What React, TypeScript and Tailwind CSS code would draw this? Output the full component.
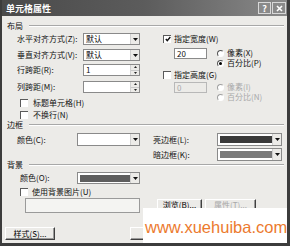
import React from "react";

const F = "font-['Noto_Sans_CJK_SC','Noto_Sans',sans-serif]";

function Arrow() {
  return (
    <svg width="5" height="3" viewBox="0 0 5 3">
      <path d="M0 0H5L2.5 3Z" fill="#111" />
    </svg>
  );
}

function Dropdown({ w, h = 12, text, swatch }: { w: string; h?: number; text?: string; swatch?: string }) {
  return (
    <div className={`${w} flex border border-[#8a8a8a] bg-white`} style={{ height: h }}>
      <div className="flex flex-1 items-center pl-[2px] text-[8px] leading-none text-black">
        {swatch ? <div className="h-[70%] w-full" style={{ background: swatch }} /> : text}
      </div>
      <div className="flex w-[9px] items-center justify-center border-l border-[#d0d0d0] bg-[#ecebe8]">
        <Arrow />
      </div>
    </div>
  );
}

function Spin({ text }: { text?: string }) {
  return (
    <div className="flex h-[12px] w-[57px] border border-[#8a8a8a] bg-white">
      <div className="flex flex-1 items-center pl-[2px] text-[8px] leading-none">{text}</div>
      <div className="flex w-[9px] flex-col border-l border-[#d0d0d0] bg-[#ecebe8]">
        <div className="flex flex-1 items-center justify-center border-b border-[#c8c8c8]">
          <svg width="3" height="2" viewBox="0 0 3 2"><path d="M0 2H3L1.5 0Z" fill="#222" /></svg>
        </div>
        <div className="flex flex-1 items-center justify-center">
          <svg width="3" height="2" viewBox="0 0 3 2"><path d="M0 0H3L1.5 2Z" fill="#222" /></svg>
        </div>
      </div>
    </div>
  );
}

function Check({ checked }: { checked?: boolean }) {
  return (
    <div className="flex h-[8px] w-[8px] shrink-0 items-center justify-center border-l-[1.5px] border-t-[1.5px] border-[#5a5a5a] bg-white">
      {checked && (
        <svg width="6" height="6" viewBox="0 0 6 6">
          <path d="M0.8 3L2.3 4.6L5.3 1" stroke="#111" strokeWidth="1.4" fill="none" />
        </svg>
      )}
    </div>
  );
}

function Radio({ checked, disabled }: { checked?: boolean; disabled?: boolean }) {
  return (
    <div
      className={`flex h-[7px] w-[7px] shrink-0 items-center justify-center rounded-full border border-b-white border-r-white bg-white ${
        disabled ? "border-l-[#a0a0a0] border-t-[#a0a0a0]" : "border-l-[#555] border-t-[#555]"
      }`}
    >
      {checked && <div className="h-[3px] w-[3px] rounded-full bg-black" />}
    </div>
  );
}

function Btn({ w, text, disabled }: { w: string; text?: string; disabled?: boolean }) {
  return (
    <div
      className={`${w} flex h-full items-center justify-center border border-l-white border-t-white border-r-[#404040] border-b-[#404040] bg-[#ecebe8] text-[8px] leading-none shadow-[inset_-1px_-1px_0_#9a9a9a] ${
        disabled ? "text-[#a8a8a8]" : "text-black"
      }`}
    >
      {text}
    </div>
  );
}

function Header({ text }: { text: string }) {
  return (
    <div className="flex h-[8px] items-center">
      <span className="pl-[5px] text-[8px] leading-none">{text}</span>
      <div className="ml-[6px] mr-[3px] h-[2px] flex-1 border-t border-b border-t-[#a8a8a8] border-b-white" />
    </div>
  );
}

export default function App() {
  return (
    <div
      className={`${F} relative h-[246px] w-[290px] overflow-hidden border-b-[3px] border-l-2 border-r-[3px] border-[#3c3c3c] bg-[#ecebe8] text-[#111]`}
    >
      {/* title bar */}
      <div className="flex h-[16px] items-center justify-between bg-gradient-to-r from-[#4a4a4a] via-[#5c5c5c] to-[#8a8a8a] pl-[4px] pr-[1px]">
        <span className="text-[9px] font-bold leading-none text-white">单元格属性</span>
        <div className="flex gap-[1px]">
          <div className="flex h-[12px] w-[13px] items-center justify-center border border-[#d8d8d8] bg-[#8a8a8a] text-[9px] font-bold leading-none text-white">
            ?
          </div>
          <div className="flex h-[12px] w-[14px] items-center justify-center border border-[#d8d8d8] bg-[#8a8a8a]">
            <svg width="7" height="7" viewBox="0 0 7 7">
              <path d="M1 1L6 6M6 1L1 6" stroke="#fff" strokeWidth="1.6" />
            </svg>
          </div>
        </div>
      </div>

      {/* 布局 */}
      <div className="mt-[6px]">
        <Header text="布局" />
      </div>
      <div className="mt-[3px] flex items-start text-[8px] leading-none">
        <div className="ml-[15px] flex w-[124px] flex-col">
          <div className="flex h-[12px] items-center">
            <span className="w-[66px] whitespace-nowrap">水平对齐方式(Z):</span>
            <Dropdown w="w-[57px]" text="默认" />
          </div>
          <div className="mt-[4px] flex h-[12px] items-center">
            <span className="w-[66px] whitespace-nowrap">垂直对齐方式(V):</span>
            <Dropdown w="w-[57px]" text="默认" />
          </div>
          <div className="mt-[3px] flex h-[12px] items-center">
            <span className="w-[66px]">行跨距(R):</span>
            <Spin text="1" />
          </div>
          <div className="mt-[5px] flex h-[12px] items-center">
            <span className="w-[66px]">列跨距(M):</span>
            <Spin />
          </div>
          <div className="ml-[3px] mt-[5px] flex h-[9px] items-center gap-[5px]">
            <Check />
            <span>标题单元格(H)</span>
          </div>
          <div className="ml-[3px] mt-[3px] flex h-[9px] items-center gap-[5px]">
            <Check />
            <span>不换行(N)</span>
          </div>
        </div>

        <div className="ml-[22px] flex flex-col">
          <div className="mt-[1px] flex h-[9px] items-center gap-[3px]">
            <Check checked />
            <span>指定宽度(W)</span>
          </div>
          <div className="mt-[5px] flex items-start">
            <div className="ml-[11px] flex h-[11px] w-[33px] items-center border border-[#8a8a8a] bg-white pl-[2px]">
              20
            </div>
            <div className="ml-[10px] flex flex-col">
              <div className="flex h-[10px] items-center gap-[3px]">
                <Radio />
                <span>像素(X)</span>
              </div>
              <div className="flex h-[10px] items-center gap-[3px]">
                <Radio checked />
                <span>百分比(P)</span>
              </div>
            </div>
          </div>
          <div className="mt-[2px] flex h-[9px] items-center gap-[3px]">
            <Check />
            <span>指定高度(G)</span>
          </div>
          <div className="mt-[3px] flex items-start text-[#a8a8a8]">
            <div className="ml-[11px] flex h-[11px] w-[33px] items-center border border-[#b8b8b8] bg-[#ecebe8] pl-[2px]">
              0
            </div>
            <div className="ml-[10px] flex flex-col">
              <div className="flex h-[10px] items-center gap-[3px]">
                <Radio disabled />
                <span>像素(I)</span>
              </div>
              <div className="flex h-[10px] items-center gap-[3px]">
                <Radio disabled />
                <span>百分比(N)</span>
              </div>
            </div>
          </div>
        </div>
      </div>

      {/* 边框 */}
      <div className="mt-[2px]">
        <Header text="边框" />
      </div>
      <div className="mt-[4px] flex items-start text-[8px] leading-none">
        <div className="ml-[15px] flex h-[13px] items-center">
          <span className="w-[60px]">颜色(C):</span>
          <Dropdown w="w-[63px]" h={13} />
        </div>
        <div className="ml-[13px] flex flex-col">
          <div className="flex h-[13px] items-center">
            <span className="w-[64px]">亮边框(L):</span>
            <Dropdown w="w-[65px]" h={13} swatch="#3a3a3a" />
          </div>
          <div className="mt-[2px] flex h-[13px] items-center">
            <span className="w-[64px]">暗边框(K):</span>
            <Dropdown w="w-[65px]" h={13} swatch="#7a7a7a" />
          </div>
        </div>
      </div>

      {/* 背景 */}
      <div className="mt-[0px]">
        <Header text="背景" />
      </div>
      <div className="ml-[18px] mt-[3px] flex h-[12px] items-center text-[8px] leading-none">
        <span className="w-[57px]">颜色(O):</span>
        <Dropdown w="w-[63px]" h={12} swatch="#5e5e5e" />
      </div>
      <div className="ml-[18px] mt-[4px] flex h-[8px] items-center gap-[4px] text-[8px] leading-none">
        <Check />
        <span>使用背景图片(U)</span>
      </div>
      <div className="mt-[2px] flex items-start text-[8px] leading-none">
        <div className="ml-[23px] h-[15px] w-[115px] border border-[#9a9a9a] bg-[#f4f4f2]" />
        <div className="ml-[17px] mt-[1px] flex h-[12px] gap-[3px]">
          <Btn w="w-[45px]" text="浏览(B)..." />
          <Btn w="w-[51px]" text="属性(T)..." disabled />
        </div>
      </div>
      <div className="mt-[14px] flex h-[13px] text-[8px] leading-none">
        <div className="ml-[3px] flex h-full">
          <Btn w="w-[50px]" text="样式(S)..." />
        </div>
        <div className="ml-[75px] flex h-full">
          <Btn w="w-[50px]" />
        </div>
      </div>

      {/* watermark overlay */}
      <div className="absolute bottom-0 left-[141px] right-0 top-[208px] bg-white">
        <div className="absolute left-[2px] top-[11px] font-['Liberation_Sans',Arial,sans-serif] text-[16.5px] leading-none text-[#ec7a2e]">
          www.xuehuiba.com
        </div>
      </div>
    </div>
  );
}
